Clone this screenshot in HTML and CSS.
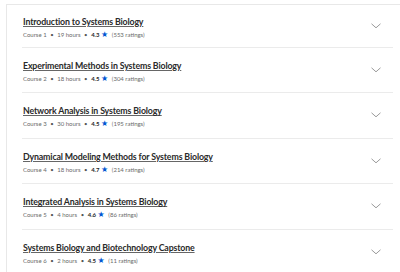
FILE: index.html
```html
<!DOCTYPE html>
<html lang="en">
<head>
    <meta charset="UTF-8">
    <title>Systems Biology Courses</title>
    <link rel="stylesheet" href="styles.css">
</head>
<body>
<div class="course-list">
    <div class="course first">
        <div class="course-inner">
            <div class="course-text">
                <a class="course-title" href="#">Introduction to Systems Biology</a>
                <p class="course-meta">Course 1 <span class="dot">•</span> 19 hours <span class="dot">•</span> <b>4.3</b> <span class="star">★</span> <span class="count">(553 ratings)</span></p>
            </div>
            <svg class="chevron" width="10" height="6" viewBox="0 0 10 6"><path d="M0.5 0.8 L5 4.8 L9.5 0.8" fill="none" stroke="#9a9a9a" stroke-width="1"/></svg>
        </div>
    </div>
    <div class="course">
        <div class="course-inner">
            <div class="course-text">
                <a class="course-title" href="#">Experimental Methods in Systems Biology</a>
                <p class="course-meta">Course 2 <span class="dot">•</span> 18 hours <span class="dot">•</span> <b>4.5</b> <span class="star">★</span> <span class="count">(304 ratings)</span></p>
            </div>
            <svg class="chevron" width="10" height="6" viewBox="0 0 10 6"><path d="M0.5 0.8 L5 4.8 L9.5 0.8" fill="none" stroke="#9a9a9a" stroke-width="1"/></svg>
        </div>
    </div>
    <div class="course">
        <div class="course-inner">
            <div class="course-text">
                <a class="course-title" href="#">Network Analysis in Systems Biology</a>
                <p class="course-meta">Course 3 <span class="dot">•</span> 30 hours <span class="dot">•</span> <b>4.5</b> <span class="star">★</span> <span class="count">(195 ratings)</span></p>
            </div>
            <svg class="chevron" width="10" height="6" viewBox="0 0 10 6"><path d="M0.5 0.8 L5 4.8 L9.5 0.8" fill="none" stroke="#9a9a9a" stroke-width="1"/></svg>
        </div>
    </div>
    <div class="course">
        <div class="course-inner">
            <div class="course-text">
                <a class="course-title" href="#">Dynamical Modeling Methods for Systems Biology</a>
                <p class="course-meta">Course 4 <span class="dot">•</span> 18 hours <span class="dot">•</span> <b>4.7</b> <span class="star">★</span> <span class="count">(214 ratings)</span></p>
            </div>
            <svg class="chevron" width="10" height="6" viewBox="0 0 10 6"><path d="M0.5 0.8 L5 4.8 L9.5 0.8" fill="none" stroke="#9a9a9a" stroke-width="1"/></svg>
        </div>
    </div>
    <div class="course">
        <div class="course-inner">
            <div class="course-text">
                <a class="course-title" href="#">Integrated Analysis in Systems Biology</a>
                <p class="course-meta">Course 5 <span class="dot">•</span> 4 hours <span class="dot">•</span> <b>4.6</b> <span class="star">★</span> <span class="count">(86 ratings)</span></p>
            </div>
            <svg class="chevron" width="10" height="6" viewBox="0 0 10 6"><path d="M0.5 0.8 L5 4.8 L9.5 0.8" fill="none" stroke="#9a9a9a" stroke-width="1"/></svg>
        </div>
    </div>
    <div class="course">
        <div class="course-inner">
            <div class="course-text">
                <a class="course-title" href="#">Systems Biology and Biotechnology Capstone</a>
                <p class="course-meta">Course 6 <span class="dot">•</span> 2 hours <span class="dot">•</span> <b>4.5</b> <span class="star">★</span> <span class="count">(11 ratings)</span></p>
            </div>
            <svg class="chevron" width="10" height="6" viewBox="0 0 10 6"><path d="M0.5 0.8 L5 4.8 L9.5 0.8" fill="none" stroke="#9a9a9a" stroke-width="1"/></svg>
        </div>
    </div>
</div>
</body>
</html>
```
FILE: styles.css
```css
body {
    margin: 0;
    padding: 0;
    background-color: #fff;
    font-family: Lato, "Liberation Sans", sans-serif;
    overflow: hidden;
}
.course-list {
    margin: 4px 0 0 6px;
    width: 400px;
    border: 1px solid #e8e8e8;
    border-bottom: none;
}
.course {
    height: 45.5px;
}
.course-inner {
    box-sizing: border-box;
    height: 100%;
    margin: 0 14px 0 15px;
    padding: 0 12px 0 1px;
    border-bottom: 1px solid #ebebeb;
    display: flex;
    align-items: center;
    justify-content: space-between;
}
.course.first {
    height: 42.5px;
}
.course-text {
    padding-top: 2px;
}
.course-title {
    display: block;
    font-size: 8.8px;
    line-height: 14px;
    letter-spacing: -0.15px;
    font-weight: 700;
    color: #2a2a2a;
    text-decoration: underline;
    text-decoration-color: #666;
    text-underline-offset: 1px;
}
.course-meta {
    margin: 2px 0 0;
    font-size: 6px;
    line-height: 8px;
    color: #6a6a6a;
}
.course-meta b {
    color: #1f1f1f;
}
.dot {
    color: #555;
    padding: 0 2px;
}
.star {
    color: #0056d2;
    font-size: 8px;
    font-family: "DejaVu Sans", sans-serif;
}
.count {
    padding-left: 2px;
}
.chevron {
    display: block;
}
```
